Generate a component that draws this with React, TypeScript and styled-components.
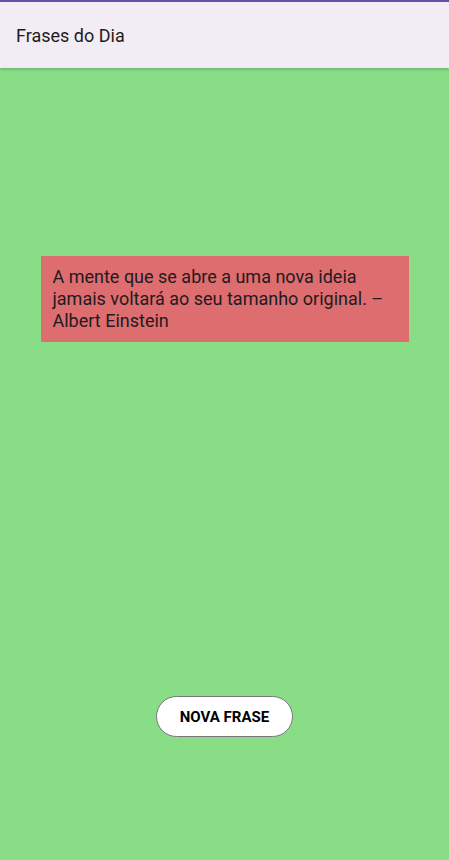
import React from "react";
import styled, { createGlobalStyle } from "styled-components";

const Global = createGlobalStyle`
  html, body { margin: 0; padding: 0; }
  body { font-family: Roboto, "Noto Sans", sans-serif; background: #88dd86; }
`;

const Screen = styled.div`
  width: 449px;
  height: 860px;
  display: flex;
  flex-direction: column;
  background: #88dd86;
  overflow: hidden;
`;

const TopBar = styled.header`
  height: 66px;
  border-top: 2px solid #6750a4;
  background: #f2edf5;
  display: flex;
  align-items: center;
  padding: 0 16px;
  box-shadow: 0 1px 3px rgba(0, 0, 0, 0.25);
  position: relative;
  z-index: 1;
`;

const Title = styled.h1`
  margin: 0;
  font-size: 18px;
  font-weight: 400;
  color: #1d1b20;
`;

const Main = styled.main`
  flex: 1;
  display: flex;
  flex-direction: column;
  align-items: center;
  padding-top: 188px;
  gap: 354px;
`;

const QuoteCard = styled.div`
  width: 368px;
  box-sizing: border-box;
  background: #de6d70;
  padding: 10px 12px;
  font-size: 18px;
  line-height: 22px;
  color: #1d1b20;
`;

const Button = styled.button`
  width: 137px;
  height: 41px;
  border-radius: 21px;
  border: 1px solid #79747e;
  background: #ffffff;
  font-family: Roboto, sans-serif;
  font-weight: 700;
  font-size: 15px;
  color: #000;
  text-transform: uppercase;
  cursor: pointer;
  padding: 0;
`;

export default function App() {
  return (
    <>
      <Global />
      <Screen>
        <TopBar>
          <Title>Frases do Dia</Title>
        </TopBar>
        <Main>
          <QuoteCard>
            A mente que se abre a uma nova ideia jamais voltará ao seu tamanho original. – Albert Einstein
          </QuoteCard>
          <Button>Nova Frase</Button>
        </Main>
      </Screen>
    </>
  );
}
